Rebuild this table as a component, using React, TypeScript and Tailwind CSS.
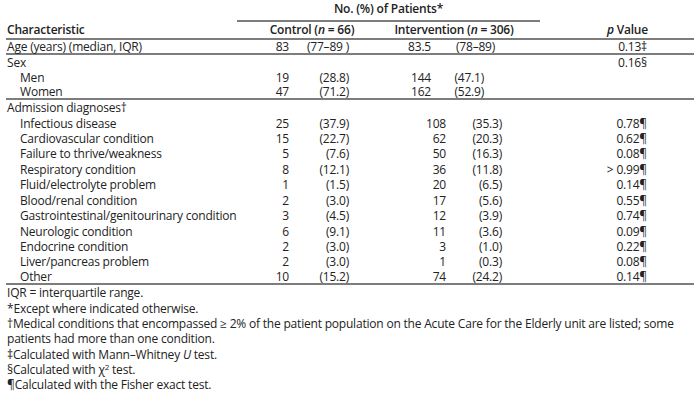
const font = { fontFamily: '"Open Sans", "Noto Sans", sans-serif' };

type Row = {
  label: string;
  indent?: boolean;
  cn?: string;
  cp?: string;
  inn?: string;
  ip?: string;
  p?: string;
  line?: boolean;
  kind?: "age" | "sex" | "diag";
};

const rows: Row[] = [
  { label: "Age (years) (median, IQR)", cn: "83", cp: "(77–89 )", inn: "83.5", ip: "(78–89)", p: "0.13‡", line: true, kind: "age" },
  { label: "Sex", p: "0.16§", kind: "sex" },
  { label: "Men", indent: true, cn: "19", cp: "(28.8)", inn: "144", ip: "(47.1)", kind: "sex" },
  { label: "Women", indent: true, cn: "47", cp: "(71.2)", inn: "162", ip: "(52.9)", line: true, kind: "sex" },
  { label: "Admission diagnoses†" },
  { label: "Infectious disease", indent: true, cn: "25", cp: "(37.9)", inn: "108", ip: "(35.3)", p: "0.78¶" },
  { label: "Cardiovascular condition", indent: true, cn: "15", cp: "(22.7)", inn: "62", ip: "(20.3)", p: "0.62¶" },
  { label: "Failure to thrive/weakness", indent: true, cn: "5", cp: "(7.6)", inn: "50", ip: "(16.3)", p: "0.08¶" },
  { label: "Respiratory condition", indent: true, cn: "8", cp: "(12.1)", inn: "36", ip: "(11.8)", p: "> 0.99¶" },
  { label: "Fluid/electrolyte problem", indent: true, cn: "1", cp: "(1.5)", inn: "20", ip: "(6.5)", p: "0.14¶" },
  { label: "Blood/renal condition", indent: true, cn: "2", cp: "(3.0)", inn: "17", ip: "(5.6)", p: "0.55¶" },
  { label: "Gastrointestinal/genitourinary condition", indent: true, cn: "3", cp: "(4.5)", inn: "12", ip: "(3.9)", p: "0.74¶" },
  { label: "Neurologic condition", indent: true, cn: "6", cp: "(9.1)", inn: "11", ip: "(3.6)", p: "0.09¶" },
  { label: "Endocrine condition", indent: true, cn: "2", cp: "(3.0)", inn: "3", ip: "(1.0)", p: "0.22¶" },
  { label: "Liver/pancreas problem", indent: true, cn: "2", cp: "(3.0)", inn: "1", ip: "(0.3)", p: "0.08¶" },
  { label: "Other", indent: true, cn: "10", cp: "(15.2)", inn: "74", ip: "(24.2)", p: "0.14¶", line: true },
];

function DataRow({ r }: { r: Row }) {
  const height =
    r.kind === "age"
      ? "h-[15px] leading-[13px] "
      : r.kind === "sex"
      ? r.line
        ? "h-[15.2px] leading-[13.2px] "
        : "h-[15.2px] leading-[15.2px] "
      : r.line
      ? "h-[15.45px] leading-[13.45px] "
      : "h-[15.45px] leading-[15.45px] ";
  const shifted = r.kind === "age" || r.kind === "sex";
  return (
    <div className={"flex whitespace-nowrap " + height + (r.line ? "border-b-2 border-[#7d7d7d]" : "")}>
      <div className={"w-[244px] " + (r.indent ? "pl-[14px]" : "pl-[1px]")}>{r.label}</div>
      <div className="w-[39px] text-right">{r.cn}</div>
      <div className="w-[60px] text-right">{r.cp}</div>
      <div className={"w-[97px] text-right " + (shifted ? "pr-[15px]" : "")}>{r.inn}</div>
      <div
        className={
          "w-[56px] " +
          (r.kind === "age" ? "pl-[10px] text-left" : r.kind === "sex" ? "pr-[18px] text-right" : "text-right")
        }
      >
        {r.ip}
      </div>
      <div className="w-[145px] text-right">{r.p}</div>
    </div>
  );
}

export default function App() {
  return (
    <div className="w-[700px] h-[404px] bg-white text-[#222] text-[12px] tracking-[-0.2px]" style={font}>
      <div className="mx-[6px] w-[688px]">
        <div className="flex h-[22px] pt-[1px]">
          <div className="w-[231px]" />
          <div className="w-[303px] border-b-2 border-[#7d7d7d] text-center font-semibold leading-[15px]">
            No. (%) of Patients*
          </div>
        </div>
        <div className="flex h-[17.5px] leading-[15px] border-b-2 border-[#7d7d7d] font-semibold whitespace-nowrap">
          <div className="w-[244px] pl-[1px]">Characteristic</div>
          <div className="w-[124px] text-center">
            Control (<span className="italic">n</span> = 66)
          </div>
          <div className="w-[160px] text-center">
            Intervention (<span className="italic">n</span> = 306)
          </div>
          <div className="w-[114px] text-right">
            <span className="italic">p</span> Value
          </div>
        </div>
        {rows.map((r) => (
          <DataRow key={r.label} r={r} />
        ))}
        <div className="pl-[1px] leading-[15.35px] whitespace-nowrap">
          <div>IQR = interquartile range.</div>
          <div>*Except where indicated otherwise.</div>
          <div>
            †Medical conditions that encompassed ≥ 2% of the patient population on the Acute Care for the Elderly unit are listed; some
          </div>
          <div>patients had more than one condition.</div>
          <div>
            ‡Calculated with Mann–Whitney <span className="italic">U</span> test.
          </div>
          <div>
            §Calculated with χ<sup className="text-[8px]">2</sup> test.
          </div>
          <div>¶Calculated with the Fisher exact test.</div>
        </div>
      </div>
    </div>
  );
}
